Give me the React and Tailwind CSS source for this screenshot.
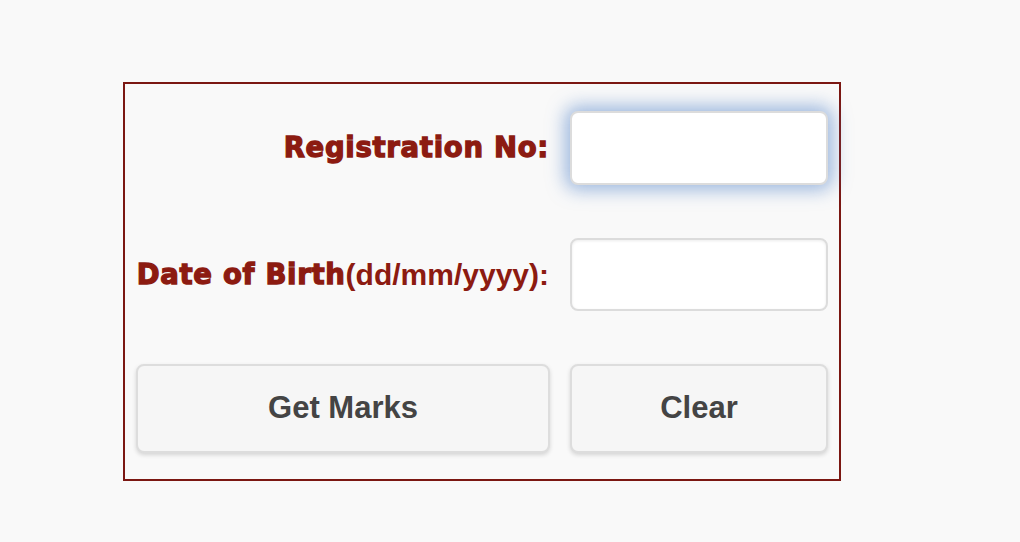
export default function App() {
  const heavy = { fontFamily: '"DejaVu Sans", sans-serif' };
  return (
    <div className="min-h-[542px] w-[1020px] bg-[#f9f9f9] pt-[82px] pl-[123px]">
      <div className="box-border h-[399px] w-[718px] border-2 border-[#7b1712] pt-[27px] pl-[11px] pr-[10px]">
        <div className="grid grid-cols-[414px_258px] gap-x-[20px]">
          <div
            className="flex h-[74px] items-center justify-end pr-[1px] text-[27.5px] font-bold tracking-[0.7px] text-[#8c1b11] [-webkit-text-stroke:1.3px_#8c1b11]"
            style={heavy}
          >
            Registration No:
          </div>
          <input
            type="text"
            className="h-[74px] w-[258px] rounded-[8px] border-2 border-[#dcdcdc] bg-white shadow-[0_0_18px_5px_rgba(80,130,200,0.55)] outline-none"
          />
          <div className="mt-[53px] flex h-[73px] items-center justify-end pr-[1px] text-[#8c1b11]">
            <span
              className="text-[27.5px] font-bold tracking-[0.7px] [-webkit-text-stroke:1.3px_#8c1b11]"
              style={heavy}
            >
              Date of Birth
            </span>
            <span
              className="text-[30px] font-bold"
              style={{ fontFamily: '"Liberation Sans", Arial, sans-serif' }}
            >
              (dd/mm/yyyy):
            </span>
          </div>
          <input
            type="text"
            className="mt-[53px] h-[73px] w-[258px] rounded-[8px] border-2 border-[#dcdcdc] bg-white shadow-[inset_0_1px_3px_rgba(0,0,0,0.08)] outline-none"
          />
          <button
            className="mt-[53px] h-[89px] rounded-[8px] border-2 border-[#dddddd] bg-[#f6f6f6] text-[31px] font-bold text-[#444444] shadow-[0_2px_4px_rgba(0,0,0,0.15)]"
            style={{ fontFamily: '"Liberation Sans", Arial, sans-serif' }}
          >
            Get Marks
          </button>
          <button
            className="mt-[53px] h-[89px] rounded-[8px] border-2 border-[#dddddd] bg-[#f6f6f6] text-[31px] font-bold text-[#444444] shadow-[0_2px_4px_rgba(0,0,0,0.15)]"
            style={{ fontFamily: '"Liberation Sans", Arial, sans-serif' }}
          >
            Clear
          </button>
        </div>
      </div>
    </div>
  );
}
